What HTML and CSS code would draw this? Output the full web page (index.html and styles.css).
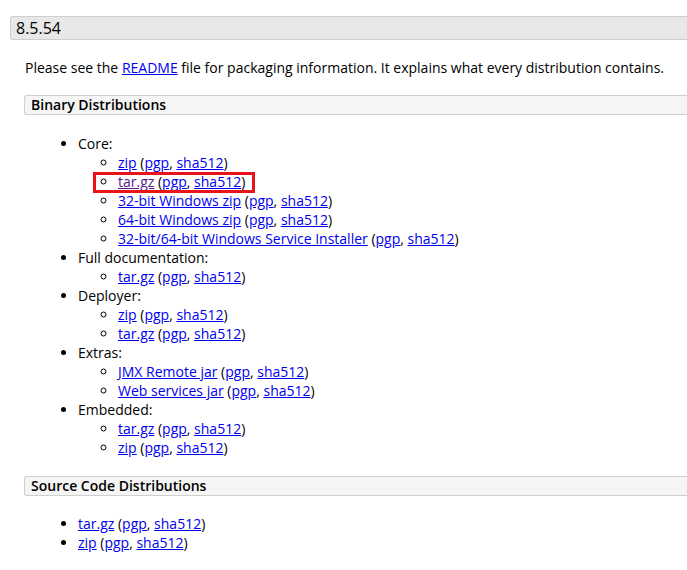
FILE: index.html
```html
<!DOCTYPE html>
<html>
<head>
<meta charset="utf-8">
<link rel="stylesheet" href="styles.css">
</head>
<body>
<div class="page">
  <h2 class="version">8.5.54</h2>
  <div class="section">
    <p class="intro">Please see the <a href="#">README</a> file for packaging information. It explains what every distribution contains.</p>
    <h3 class="dist">Binary Distributions</h3>
    <ul class="list">
      <li>Core:
        <ul class="sub">
          <li><a href="#">zip</a> (<a href="#">pgp</a>, <a href="#">sha512</a>)</li>
          <li class="highlight"><a href="#" class="visited">tar.gz</a> (<a href="#">pgp</a>, <a href="#">sha512</a>)</li>
          <li><a href="#">32-bit Windows zip</a> (<a href="#">pgp</a>, <a href="#">sha512</a>)</li>
          <li><a href="#">64-bit Windows zip</a> (<a href="#">pgp</a>, <a href="#">sha512</a>)</li>
          <li><a href="#">32-bit/64-bit Windows Service Installer</a> (<a href="#">pgp</a>, <a href="#">sha512</a>)</li>
        </ul>
      </li>
      <li>Full documentation:
        <ul class="sub">
          <li><a href="#">tar.gz</a> (<a href="#">pgp</a>, <a href="#">sha512</a>)</li>
        </ul>
      </li>
      <li>Deployer:
        <ul class="sub">
          <li><a href="#">zip</a> (<a href="#">pgp</a>, <a href="#">sha512</a>)</li>
          <li><a href="#">tar.gz</a> (<a href="#">pgp</a>, <a href="#">sha512</a>)</li>
        </ul>
      </li>
      <li>Extras:
        <ul class="sub">
          <li><a href="#">JMX Remote jar</a> (<a href="#">pgp</a>, <a href="#">sha512</a>)</li>
          <li><a href="#">Web services jar</a> (<a href="#">pgp</a>, <a href="#">sha512</a>)</li>
        </ul>
      </li>
      <li>Embedded:
        <ul class="sub">
          <li><a href="#">tar.gz</a> (<a href="#">pgp</a>, <a href="#">sha512</a>)</li>
          <li><a href="#">zip</a> (<a href="#">pgp</a>, <a href="#">sha512</a>)</li>
        </ul>
      </li>
    </ul>
    <h3 class="dist">Source Code Distributions</h3>
    <ul class="list list-src">
      <li><a href="#">tar.gz</a> (<a href="#">pgp</a>, <a href="#">sha512</a>)</li>
      <li><a href="#">zip</a> (<a href="#">pgp</a>, <a href="#">sha512</a>)</li>
    </ul>
  </div>
</div>
</body>
</html>
```

FILE: styles.css
```css
html, body {
  margin: 0;
  padding: 0;
  background: #fff;
  overflow: hidden;
}
body {
  font-family: "Open Sans", "Liberation Sans", sans-serif;
  font-size: 14px;
  color: #000;
}
.page {
  padding: 16px 0 0 10px;
}
a {
  color: #0000ee;
  text-decoration: underline;
}
a.visited {
  color: #551a8b;
}
.version {
  margin: 0;
  height: 24px;
  box-sizing: border-box;
  border: 1px solid #cfcfcf;
  border-right: 0;
  border-radius: 3px 0 0 3px;
  background: #e8e8e8;
  font-size: 16px;
  font-weight: 400;
  line-height: 22px;
  padding: 0 5px;
}
.section {
  margin-left: 14px;
}
.intro {
  margin: 18px 0 0 1px;
  line-height: 19px;
}
.dist {
  margin: 18px 0 0 0;
  height: 20px;
  box-sizing: border-box;
  border: 1px solid #cfcfcf;
  border-right: 0;
  border-radius: 3px 0 0 3px;
  background: #f5f5f5;
  font-size: 14px;
  font-weight: 600;
  line-height: 18px;
  padding: 0 6px;
}
.list {
  margin: 19px 0 19px 0;
  padding-left: 54px;
  list-style: disc;
  line-height: 19px;
}
.list-src {
  margin-top: 18px;
}
.sub {
  margin: 0;
  padding-left: 40px;
  list-style: circle;
}
.highlight {
  position: relative;
}
.highlight::before {
  content: "";
  position: absolute;
  left: -25px;
  top: 0;
  width: 162px;
  height: 21px;
  box-sizing: border-box;
  border: 3px solid #e8141a;
}
```
